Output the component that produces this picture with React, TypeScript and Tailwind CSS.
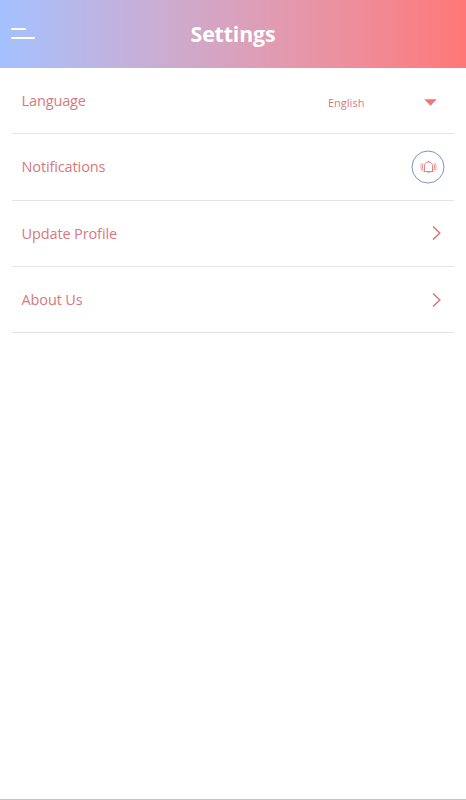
import type { ReactNode } from "react";

function Chevron() {
  return (
    <svg className="mr-[13px] h-[14px] w-[9px]" viewBox="0 0 9 14" fill="none" stroke="#dc7578" strokeWidth="1.5">
      <path d="M1 .5 7.8 7 1 13.5" />
    </svg>
  );
}

function NotificationToggle() {
  return (
    <button className="mr-[9px] flex size-[34px] items-center justify-center" aria-label="Notifications">
      <svg className="size-[34px]" viewBox="0 0 34 34" fill="none">
        <circle cx="17" cy="17" r="16" stroke="#7c95bd" strokeWidth="1" />
        <g stroke="#df8486" strokeWidth="1" strokeLinecap="round" strokeLinejoin="round">
          <path d="M12.8 21.5h9.4M13.5 21.3v-5.4c0-2.4 1.6-3.9 4-3.9s4 1.5 4 3.9v5.4M17.5 11.8v-.6M16.6 22.5c.4.5 1.4.5 1.8 0" />
          <path d="M11.9 14.2c-.8 1.8-.8 3.8 0 5.6M23.1 14.2c.8 1.8.8 3.8 0 5.6" />
          <path d="M10.5 13.6c-.9 2.2-.9 4.5 0 6.7M24.5 13.6c.9 2.2.9 4.5 0 6.7" strokeWidth=".7" />
        </g>
      </svg>
    </button>
  );
}

function Row({ label, children }: { label: string; children: ReactNode }) {
  return (
    <li className="flex h-[66.3px] items-center justify-between border-b border-[#e3e3e8] pl-[9.5px]">
      <span className="pt-px text-[14.5px] leading-5 tracking-[-0.12px]">{label}</span>
      {children}
    </li>
  );
}

export default function App() {
  return (
    <div className="flex h-[800px] w-full flex-col border-b border-[#c5c5c5] bg-white font-['Open_Sans',sans-serif] text-[#d6797d]">
      <header className="grid h-[68px] shrink-0 grid-cols-[1fr_auto_1fr] items-center bg-linear-to-r from-[#a3c1ff] to-[#ff7777]">
        <button className="mb-[2px] ml-[11px] flex w-6 flex-col gap-[7px]" aria-label="Menu">
          <span className="h-[2px] w-[15px] rounded-full bg-white" />
          <span className="h-[2px] w-6 rounded-full bg-white" />
        </button>
        <h1 className="text-[21.25px] leading-7 font-bold tracking-[-0.1px] text-white">Settings</h1>
      </header>
      <ul className="mx-3">
        <Row label="Language">
          <button className="mr-[17px] flex w-[109px] items-center justify-between">
            <span className="pt-[4px] text-[11px] leading-4">English</span>
            <svg className="mt-[3px] h-[7px] w-[13px]" viewBox="0 0 13 7">
              <path d="M.2.2h12.6L6.5 6.8Z" fill="#ee777b" />
            </svg>
          </button>
        </Row>
        <Row label="Notifications">
          <NotificationToggle />
        </Row>
        <Row label="Update Profile">
          <Chevron />
        </Row>
        <Row label="About Us">
          <Chevron />
        </Row>
      </ul>
    </div>
  );
}
